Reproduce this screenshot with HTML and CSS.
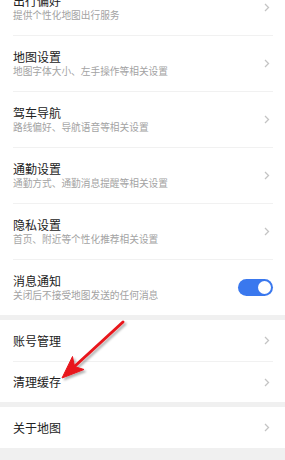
FILE: index.html
```html
<!DOCTYPE html>
<html lang="zh-CN">
<head>
<meta charset="utf-8">
<link rel="stylesheet" href="styles.css">
</head>
<body>
<div class="page">
  <section class="group">
    <div class="row tall">
      <div class="text"><div class="title">出行偏好</div><div class="sub">提供个性化地图出行服务</div></div>
      <svg class="chev" width="6" height="9" viewBox="0 0 6 9"><path d="M1 1l3.5 3.5L1 8" fill="none" stroke="#c4c4c4" stroke-width="1.3"/></svg>
    </div>
    <div class="row tall">
      <div class="text"><div class="title">地图设置</div><div class="sub">地图字体大小、左手操作等相关设置</div></div>
      <svg class="chev" width="6" height="9" viewBox="0 0 6 9"><path d="M1 1l3.5 3.5L1 8" fill="none" stroke="#c4c4c4" stroke-width="1.3"/></svg>
    </div>
    <div class="row tall">
      <div class="text"><div class="title">驾车导航</div><div class="sub">路线偏好、导航语音等相关设置</div></div>
      <svg class="chev" width="6" height="9" viewBox="0 0 6 9"><path d="M1 1l3.5 3.5L1 8" fill="none" stroke="#c4c4c4" stroke-width="1.3"/></svg>
    </div>
    <div class="row tall">
      <div class="text"><div class="title">通勤设置</div><div class="sub">通勤方式、通勤消息提醒等相关设置</div></div>
      <svg class="chev" width="6" height="9" viewBox="0 0 6 9"><path d="M1 1l3.5 3.5L1 8" fill="none" stroke="#c4c4c4" stroke-width="1.3"/></svg>
    </div>
    <div class="row tall">
      <div class="text"><div class="title">隐私设置</div><div class="sub">首页、附近等个性化推荐相关设置</div></div>
      <svg class="chev" width="6" height="9" viewBox="0 0 6 9"><path d="M1 1l3.5 3.5L1 8" fill="none" stroke="#c4c4c4" stroke-width="1.3"/></svg>
    </div>
    <div class="row tall">
      <div class="text"><div class="title">消息通知</div><div class="sub">关闭后不接受地图发送的任何消息</div></div>
      <div class="toggle"><div class="knob"></div></div>
    </div>
  </section>
  <section class="group">
    <div class="row short">
      <div class="text"><div class="title">账号管理</div></div>
      <svg class="chev" width="6" height="9" viewBox="0 0 6 9"><path d="M1 1l3.5 3.5L1 8" fill="none" stroke="#c4c4c4" stroke-width="1.3"/></svg>
    </div>
    <div class="row short">
      <div class="text"><div class="title">清理缓存</div></div>
      <svg class="chev" width="6" height="9" viewBox="0 0 6 9"><path d="M1 1l3.5 3.5L1 8" fill="none" stroke="#c4c4c4" stroke-width="1.3"/></svg>
    </div>
  </section>
  <section class="group">
    <div class="row short">
      <div class="text"><div class="title">关于地图</div></div>
      <svg class="chev" width="6" height="9" viewBox="0 0 6 9"><path d="M1 1l3.5 3.5L1 8" fill="none" stroke="#c4c4c4" stroke-width="1.3"/></svg>
    </div>
  </section>
</div>
<svg class="arrow" width="285" height="460" viewBox="0 0 285 460">
  <defs>
    <filter id="sh" x="-20%" y="-20%" width="140%" height="140%">
      <feDropShadow dx="2" dy="2" stdDeviation="1.2" flood-color="#000" flood-opacity="0.3"/>
    </filter>
  </defs>
  <g filter="url(#sh)" fill="#e8161b" stroke="#e8161b">
    <line x1="123" y1="322" x2="75" y2="366" stroke-width="3" stroke-linecap="round"/>
    <path d="M62 378 L72.5 356.5 L74.5 366.5 L84 369.5 Z" stroke-width="1" stroke-linejoin="round"/>
  </g>
</svg>
</body>
</html>
```
FILE: styles.css
```css
html, body {
  margin: 0;
  padding: 0;
  background: #f0f0f0;
  font-family: "Noto Sans CJK SC", "Noto Sans", sans-serif;
}
body {
  width: 285px;
  height: 460px;
  overflow: hidden;
  position: relative;
}
.page {
  margin-top: -21px;
  display: flex;
  flex-direction: column;
  gap: 5px;
}
.group {
  background: #fff;
  padding: 0 12px 0 13px;
}
.row {
  display: flex;
  align-items: center;
  justify-content: space-between;
  box-sizing: border-box;
}
.row + .row {
  border-top: 1px solid #f1f1f1;
}
.tall { height: 56px; }
.short { height: 41px; }
.text {
  display: flex;
  flex-direction: column;
}
.title {
  font-size: 12px;
  line-height: 16px;
  color: #222;
}
.sub {
  font-size: 9.7px;
  line-height: 13px;
  color: #a3a3a3;
}
.chev {
  margin-right: 3px;
  display: block;
}
.toggle {
  width: 35px;
  height: 17px;
  border-radius: 9px;
  background: #3a78ee;
  display: flex;
  align-items: center;
  justify-content: flex-end;
  padding: 0 2px;
  box-sizing: border-box;
}
.knob {
  width: 13px;
  height: 13px;
  border-radius: 50%;
  background: #fff;
}
.arrow {
  position: absolute;
  left: 0;
  top: 0;
  pointer-events: none;
}
```
